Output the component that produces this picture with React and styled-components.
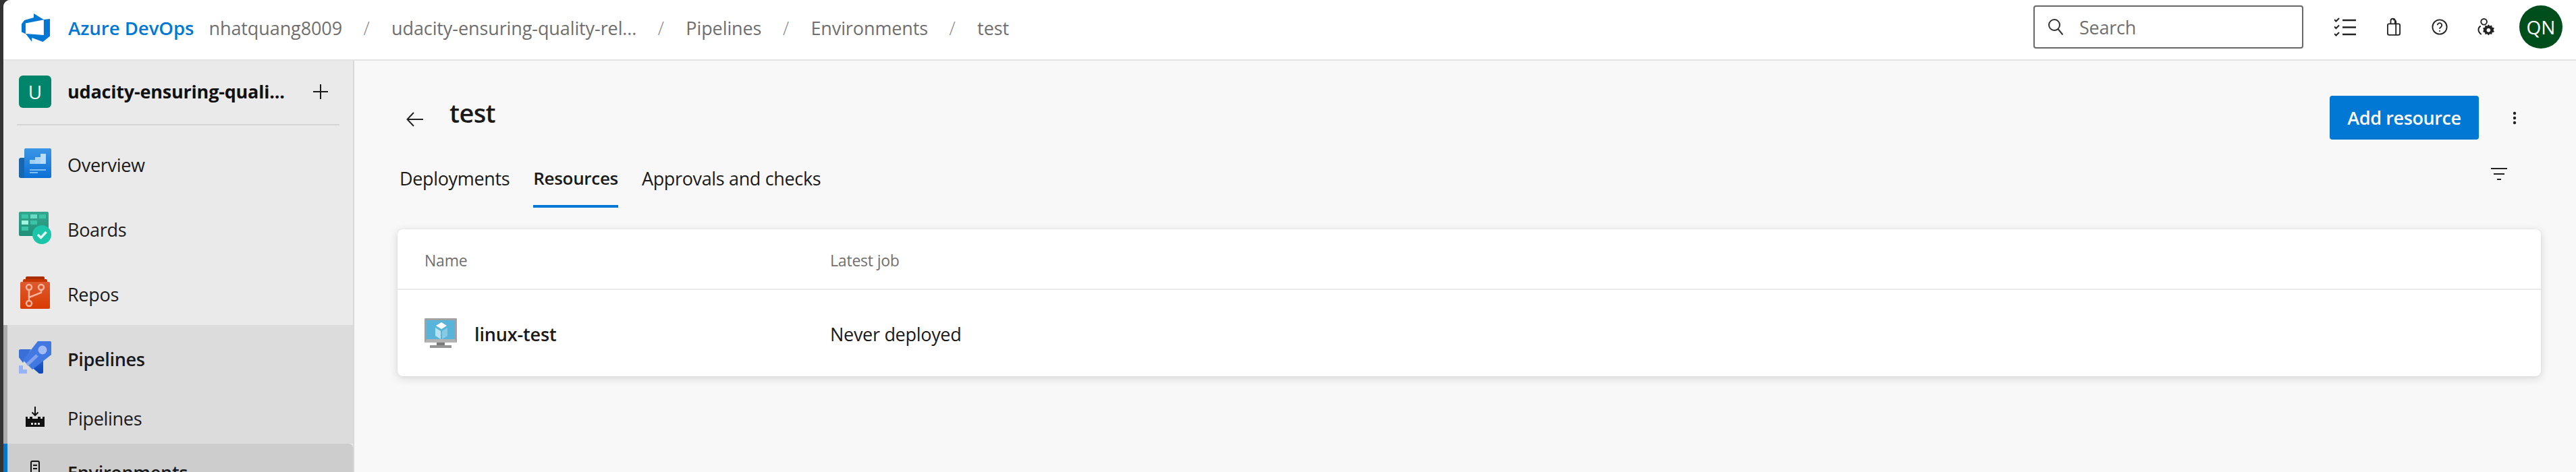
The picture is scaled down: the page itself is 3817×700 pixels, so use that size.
import React from 'react';
import styled, { createGlobalStyle } from 'styled-components';

const Global = createGlobalStyle`
  html, body { margin: 0; padding: 0; background: #333; }
  body { font-family: "Open Sans", "Noto Sans", sans-serif; color: #1a1a1a; }
  * { box-sizing: border-box; }
`;
const Frame = styled.div`
  width: 3817px; height: 700px; overflow: hidden; background: #333; padding-left: 5px;
`;
const Win = styled.div`
  height: 700px; display: flex; flex-direction: column; background: #f8f8f8; border-top-left-radius: 10px; overflow: hidden;
`;
const Header = styled.header`
  height: 90px; flex: none; display: flex; align-items: center; background: #fff; border-bottom: 2px solid #e4e4e4; padding: 0 20px 8px 27px;
`;
const LogoWrap = styled.div`display: flex; margin-top: 2px;`;
const Brand = styled.span`
  margin: 2px 22px 0 27px; font-size: 27.5px; font-weight: 600; color: #0078d4;
`;
const Crumb = styled.span`
  margin-top: 2px; font-size: 27px; color: #6f6f6f; letter-spacing: -0.1px; white-space: nowrap;
`;
const Sep = styled.span`
  margin: 2px 31.5px 0; font-size: 27px; color: #8a8a8a; width: 10px; font-weight: 300;
`;
const Spacer = styled.div`flex: 1;`;
const SearchBox = styled.div`
  width: 400px; height: 64px; border: 2px solid #666; border-radius: 4px; display: flex; align-items: center; padding-left: 19px; gap: 23px; background: #fff;
`;
const SearchText = styled.span`font-size: 27px; color: #6f6f6f; letter-spacing: -0.25px;`;
const HeadIcons = styled.div`
  display: flex; align-items: center; margin-left: 46px;
`;
const HeadIcon = styled.div`
  width: ${p => p.$w}px; margin-right: ${p => p.$gap}px; display: flex; justify-content: center;
`;
const Avatar = styled.div`
  width: 64px; height: 64px; border-radius: 50%; background: #004e1c; color: #fff; display: flex; align-items: center; justify-content: center; font-size: 28px;
`;
const Body = styled.div`flex: 1; display: flex; min-height: 0;`;
const Side = styled.nav`
  width: 520px; flex: none; background: #eaeaea; border-right: 2px solid #d8d8d8;
`;
const Project = styled.div`
  height: 94px; padding: 22px 37px 24px 23px; display: flex; align-items: center;
`;
const Tile = styled.div`
  width: 48px; height: 48px; border-radius: 6px; background: #00856b; color: #fff; font-size: 28px; display: flex; align-items: center; justify-content: center; flex: none;
`;
const ProjectName = styled.span`
  margin-left: 24px; flex: 1; line-height: 48px; font-size: 27px; font-weight: 700; letter-spacing: -0.2px; white-space: nowrap; color: #111;
`;
const Rule = styled.div`height: 2px; background: #d4d4d4; margin: 0 20px; width: 478px;`;
const Nav = styled.div`margin-top: 8px;`;
const Item = styled.div`
  display: flex; align-items: center; height: ${p => p.$sub ? 80 : 96}px; position: relative; background: ${p => p.$bg || 'transparent'};
  border-left: 6px solid ${p => p.$bar || 'transparent'}; padding-left: 17px;
  border-top-right-radius: ${p => p.$round ? 6 : 0}px;
`;
const ItemIcon = styled.div`width: 48px; flex: none; display: flex; justify-content: center;`;
const ItemText = styled.span`
  margin: 4px 0 0 24px; font-size: 27px; letter-spacing: -0.3px; font-weight: ${p => p.$w || 400}; color: #1a1a1a;
`;
const Main = styled.main`flex: 1; padding: 52px 52px 0 64px; min-width: 0;`;
const TitleRow = styled.div`display: flex; align-items: center; height: 65px;`;
const BackIcon = styled.div`margin-left: 13px; display: flex; margin-top: 5px;`;
const Title = styled.h1`
  margin: 0 0 15px 39px; font-size: 38px; font-weight: 600; letter-spacing: -0.6px; color: #1a1a1a;
`;
const Primary = styled.button`
  width: 221px; height: 65px; border: 0; border-radius: 4px; background: #0078d4; color: #fff; font: 600 27px "Open Sans", sans-serif; letter-spacing: -0.4px;
`;
const More = styled.div`width: 48px; display: flex; justify-content: center; margin: 0 15px 0 29px;`;
const TabRow = styled.div`display: flex; align-items: flex-end; height: 101px; padding-left: 3px;`;
const Tab = styled.div`
  height: 68px; margin-right: 35px; font-size: ${p => p.$active ? 26 : 27}px; letter-spacing: ${p => p.$active ? -0.3 : -0.35}px; font-weight: ${p => p.$active ? 600 : 400}; color: #1a1a1a; padding-top: 6px;
  border-bottom: 4px solid ${p => p.$active ? '#0078d4' : 'transparent'}; white-space: nowrap;
`;
const FilterIcon = styled.div`margin-right: 50px; align-self: flex-start; margin-top: 42px;`;
const Card = styled.section`
  margin-top: 32px; background: #fff; border-radius: 8px; box-shadow: 0 3px 14px rgba(0,0,0,.14), 0 0 3px rgba(0,0,0,.06);
`;
const Row = styled.div`
  display: grid; grid-template-columns: 601px 1fr; align-items: center; padding-left: 40px; height: ${p => p.$h}px;
  border-bottom: ${p => p.$line ? '2px solid #eaeaea' : '0'};
`;
const Th = styled.span`margin-top: 3px; font-size: 23px; color: #6f6f6f; letter-spacing: -0.2px;`;
const NameCell = styled.div`display: flex; align-items: center; gap: 26px;`;
const NameText = styled.span`margin-top: 2px; font-size: 27px; font-weight: 600; letter-spacing: -0.15px; color: #1a1a1a;`;
const Td = styled.span`margin-top: 3px; font-size: 27px; letter-spacing: -0.3px; color: #1a1a1a;`;

const Logo = () => (
  <svg width="42" height="42" viewBox="1 1 16 16"><path fill="#0078d4" d="M17 4v9.74l-4 3.28-6.2-2.26V17l-3.51-4.59 10.23.8V4.44zm-3.41.49L7.85 1v2.29L2.58 4.84 1 6.87v4.61l2.26 1V6.57z"/></svg>
);
const Search = () => (
  <svg width="24" height="24" viewBox="0 0 24 24" fill="none" stroke="#333" strokeWidth="2"><circle cx="10" cy="9" r="8"/><path d="M15.5 15l7 8.5"/></svg>
);
const Tasks = () => (
  <svg width="32" height="28" viewBox="0 0 32 28" fill="none" stroke="#222" strokeWidth="2"><path d="M0 3l2.5 2.5L7 1M0 13.500l2.500 2.500L7 11.500M0 24l2.500 2.500L7 22"/><path strokeWidth="2.600" d="M12 4h20M12 14.500h20M12 25h20"/></svg>
);
const Bag = () => (
  <svg width="20" height="28" viewBox="0 0 22 28" fill="none" stroke="#222" strokeWidth="2"><rect x="1" y="9" width="20" height="18" rx="2.500"/><path d="M6 9V4a3.500 3.500 0 0 1 7 0v5M10 2.500a3.500 3.500 0 0 1 4.500 3V27"/></svg>
);
const Help = () => (
  <svg width="24" height="24" viewBox="0 0 26 26" fill="none" stroke="#222" strokeWidth="2"><circle cx="13" cy="13" r="11.500"/><path d="M9.500 10a3.500 3.500 0 1 1 5.500 3c-1.300.9-2 1.500-2 3"/><circle cx="13" cy="19.500" r="1.100" fill="#222" stroke="none"/></svg>
);
const UserGear = () => (
  <svg width="27" height="27" viewBox="0 0 28 28" fill="none" stroke="#222" strokeWidth="2"><circle cx="11" cy="5.500" r="4.500"/><path d="M6 12c-4 2-5.500 8 1 13"/><path fill="#222" stroke="none" fillRule="evenodd" d="M18 9.500l2 2.500 3-1 .5 3 3.500 1-1.500 3 1.500 3-3.500 1-.5 3-3-1-2 2.500-2-2.500-3 1-.5-3-3-1 1-3-1-3 3-1 .5-3 3 1zM18 15.500a3 3 0 1 0 .01 0z"/></svg>
);
const Plus = () => (
  <svg width="22" height="22" viewBox="0 0 22 22" stroke="#1a1a1a" strokeWidth="2"><path d="M11 0v22M0 11h22"/></svg>
);
const Overview = () => (
  <svg width="48" height="44" viewBox="0 0 48 44">
    <defs><linearGradient id="ov" x1="0" y1="0" x2="0" y2="1"><stop offset="0" stopColor="#3c96e6"/><stop offset="1" stopColor="#0a6fd6"/></linearGradient></defs>
    <rect x="0" y="14" width="26" height="30" rx="3" fill="#1766ae"/>
    <path d="M10 0h36a2 2 0 0 1 2 2v40a2 2 0 0 1-2 2H8V2a2 2 0 0 1 2-2z" fill="url(#ov)"/>
    <rect x="16" y="17" width="8" height="6" fill="#9fcff6"/><rect x="24" y="13" width="8" height="10" fill="#a8d4f8"/><rect x="32" y="8" width="8" height="15" fill="#b8defc"/>
    <rect x="16" y="31" width="24" height="2" fill="#7fbcef"/><rect x="16" y="35" width="12" height="2" fill="#7fbcef"/>
  </svg>
);
const Boards = () => (
  <svg width="48" height="48" viewBox="0 0 48 48">
    <defs><linearGradient id="bd" x1="0" y1="0" x2="0" y2="1"><stop offset="0" stopColor="#33a88e"/><stop offset="1" stopColor="#1f8f78"/></linearGradient></defs>
    <rect width="44" height="36" rx="2" fill="url(#bd)"/>
    <rect x="4" y="4" width="10" height="6" fill="#3cc4a8"/><rect x="17" y="4" width="10" height="6" fill="#68dcc4"/><rect x="30" y="4" width="10" height="6" fill="#3cc4a8"/>
    <rect x="4" y="13" width="10" height="6" fill="#a0f5e2"/><rect x="17" y="13" width="10" height="6" fill="#3cc4a8"/>
    <rect x="4" y="22" width="10" height="6" fill="#3cc4a8"/>
    <circle cx="34" cy="34" r="14" fill="#1cc4a8"/>
    <path d="M28 34l4.500 4.500L40.500 30" fill="none" stroke="#e4fbf6" strokeWidth="3.500"/>
  </svg>
);
const Repos = () => (
  <svg width="44" height="48" viewBox="0 0 44 48">
    <defs><linearGradient id="rp" x1="0" y1="0" x2="0" y2="1"><stop offset="0" stopColor="#dd5a30"/><stop offset="1" stopColor="#d83b01"/></linearGradient></defs>
    <rect x="8" y="0" width="28" height="6" rx="2" fill="#a82e00"/><rect x="4" y="4" width="36" height="6" rx="2" fill="#c43500"/>
    <rect x="0" y="8" width="44" height="40" rx="2" fill="url(#rp)"/>
    <g fill="none" stroke="#ffb39a" strokeWidth="2.500"><circle cx="13" cy="16" r="4"/><circle cx="31" cy="16" r="4"/><circle cx="13" cy="40" r="4"/><path d="M13 20v16M31 20v4L13 31"/></g>
  </svg>
);
const Rocket = () => (
  <svg width="48" height="48" viewBox="0 0 48 48">
    <defs><linearGradient id="pl" x1="0" y1="0" x2="0" y2="1"><stop offset="0" stopColor="#2f66d6"/><stop offset="1" stopColor="#0d47b8"/></linearGradient></defs>
    <path d="M0 14a2 2 0 0 1 2-2h16L6 32 0 24z" fill="#3a6fd8"/>
    <path d="M36 22v24a2 2 0 0 1-2 2h-4L16 36z" fill="url(#pl)"/>
    <path d="M28 0h18a2 2 0 0 1 2 2v18L20 42 6 28z" fill="#4178e2"/>
    <circle cx="35" cy="13" r="6.500" fill="#a3bcf5"/>
    <path d="M12 35l15-14" stroke="#82a4ec" strokeWidth="5"/>
    <path d="M0 36h6v6h6v6H0z" fill="#96b5f8"/>
  </svg>
);
const Factory = () => (
  <svg width="28" height="30" viewBox="0 0 28 30">
    <path d="M14 0v13M9.500 8.500l4.500 4.500 4.500-4.500" fill="none" stroke="#111" strokeWidth="2"/>
    <path fill="#111" fillRule="evenodd" d="M0 15h3v3h3v-3h4v3h8v-3h4v3h3v-3h3v15H0zM8 24v3h3v-3zM13 24v3h3v-3zM18 24v3h3v-3z"/>
  </svg>
);
const EnvIcon = () => (
  <svg width="14" height="30" viewBox="0 0 14 30" fill="none" stroke="#111" strokeWidth="2"><rect x="1" y="1" width="12" height="28" rx="2"/><path d="M4 7h6M4 12h6"/></svg>
);
const Back = () => (
  <svg width="25" height="22" viewBox="0 0 25 22" fill="none" stroke="#222" strokeWidth="2"><path d="M25 11H2M11 1L1.500 11 11 21"/></svg>
);
const Dots = () => (
  <svg width="6" height="20" viewBox="0 0 6 20" fill="#222"><circle cx="3" cy="3" r="2.200"/><circle cx="3" cy="10" r="2.200"/><circle cx="3" cy="17" r="2.200"/></svg>
);
const Filter = () => (
  <svg width="24" height="18" viewBox="0 0 24 18" stroke="#222" strokeWidth="2"><path d="M0 1h24M4 9h16M9 17h6"/></svg>
);
const Vm = () => (
  <svg width="48" height="44" viewBox="0 0 48 44">
    <rect width="48" height="36" rx="1" fill="#a0a1a2"/><rect x="3" y="3" width="42" height="28" fill="#59b4d9"/>
    <path d="M0 36l3-5h42l3 5z" fill="#b3b3b3"/>
    <rect x="18" y="36" width="12" height="4" fill="#7a7a7a"/><rect x="8" y="40" width="32" height="4" fill="#949494"/>
    <path d="M25 6l8 5-8 5-8-5z" fill="#fff"/><path d="M16 14l8 5v12l-8-5z" fill="#b9e1f1"/><path d="M34 14l-8 5v12l8-5z" fill="#86cbe6"/>
  </svg>
);

export default function App() {
  return (
    <Frame>
      <Global />
      <Win>
        <Header>
          <LogoWrap><Logo /></LogoWrap>
          <Brand>Azure DevOps</Brand>
          <Crumb>nhatquang8009</Crumb>
          <Sep>/</Sep>
          <Crumb>udacity-ensuring-quality-rel...</Crumb>
          <Sep>/</Sep>
          <Crumb>Pipelines</Crumb>
          <Sep>/</Sep>
          <Crumb>Environments</Crumb>
          <Sep>/</Sep>
          <Crumb>test</Crumb>
          <Spacer />
          <SearchBox><Search /><SearchText>Search</SearchText></SearchBox>
          <HeadIcons>
            <HeadIcon $w={32} $gap={46}><Tasks /></HeadIcon>
            <HeadIcon $w={20} $gap={46}><Bag /></HeadIcon>
            <HeadIcon $w={24} $gap={43}><Help /></HeadIcon>
            <HeadIcon $w={27} $gap={36}><UserGear /></HeadIcon>
          </HeadIcons>
          <Avatar>QN</Avatar>
        </Header>
        <Body>
          <Side>
            <Project>
              <Tile>U</Tile>
              <ProjectName>udacity-ensuring-quali...</ProjectName>
              <Plus />
            </Project>
            <Rule />
            <Nav>
              <Item><ItemIcon><Overview /></ItemIcon><ItemText>Overview</ItemText></Item>
              <Item><ItemIcon><Boards /></ItemIcon><ItemText>Boards</ItemText></Item>
              <Item><ItemIcon><Repos /></ItemIcon><ItemText>Repos</ItemText></Item>
              <Item $bg="#dcdcdc" $bar="#adadad"><ItemIcon><Rocket /></ItemIcon><ItemText $w={600}>Pipelines</ItemText></Item>
              <Item $sub $bg="#dcdcdc" $bar="#adadad"><ItemIcon><Factory /></ItemIcon><ItemText>Pipelines</ItemText></Item>
              <Item $sub $bg="#cdcdcd" $bar="#0078d4" $round><ItemIcon><EnvIcon /></ItemIcon><ItemText $w={600}>Environments</ItemText></Item>
            </Nav>
          </Side>
          <Main>
            <TitleRow>
              <BackIcon><Back /></BackIcon>
              <Title>test</Title>
              <Spacer />
              <Primary>Add resource</Primary>
              <More><Dots /></More>
            </TitleRow>
            <TabRow>
              <Tab>Deployments</Tab>
              <Tab $active>Resources</Tab>
              <Tab>Approvals and checks</Tab>
              <Spacer />
              <FilterIcon><Filter /></FilterIcon>
            </TabRow>
            <Card>
              <Row $h={90} $line><Th>Name</Th><Th>Latest job</Th></Row>
              <Row $h={128}>
                <NameCell><Vm /><NameText>linux-test</NameText></NameCell>
                <Td>Never deployed</Td>
              </Row>
            </Card>
          </Main>
        </Body>
      </Win>
    </Frame>
  );
}
